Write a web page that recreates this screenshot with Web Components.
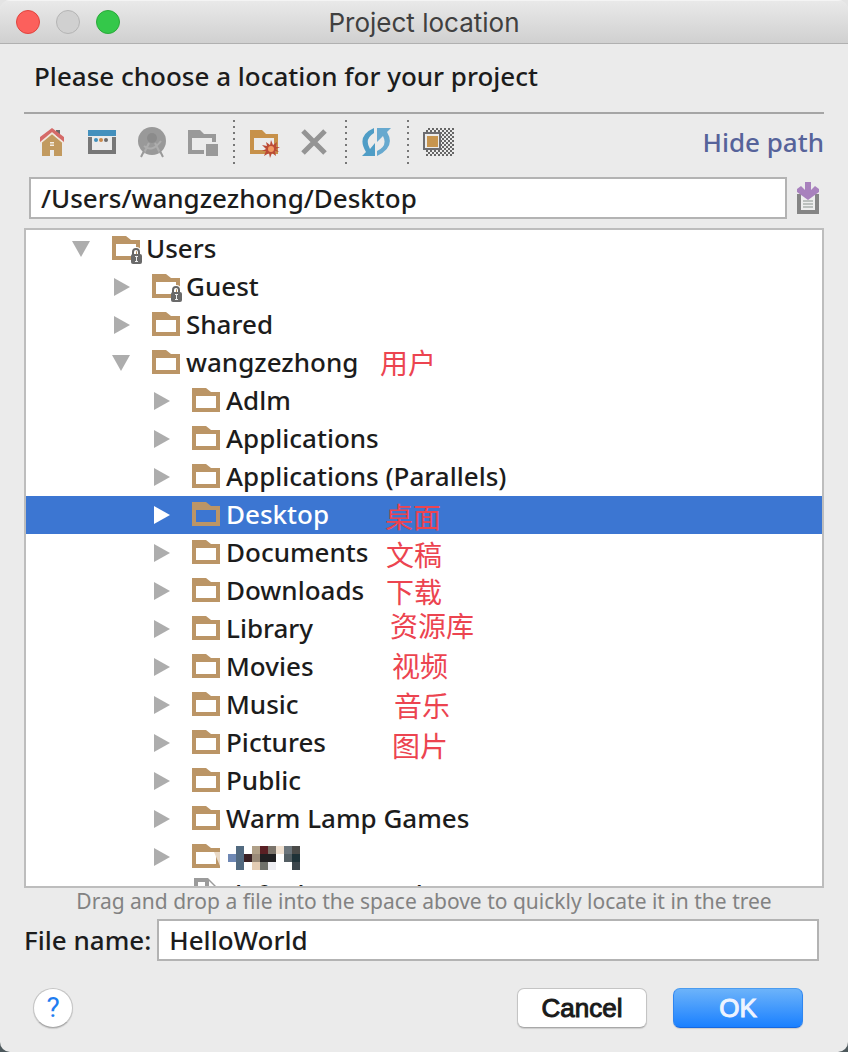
<!DOCTYPE html>
<html lang="en">
<head>
<meta charset="utf-8">
<title>Project location</title>
<style>
  html, body { margin: 0; height: 100%; }
  body {
    background: linear-gradient(#e4e4e4 50%, #4d585c 50%);
    font-family: "Noto Sans", "Noto Sans CJK SC", sans-serif;
    font-size: 26px;
    font-weight: 500;
    color: #1c1c1c;
  }
</style>
</head>
<body>
<project-dialog></project-dialog>
<script>
const define = (name, html, setup) => {
  const template = document.createElement('template');
  template.innerHTML = html;
  customElements.define(name, class extends HTMLElement {
    constructor() {
      super();
      this.attachShadow({ mode: 'open' }).append(template.content.cloneNode(true));
    }
    connectedCallback() { if (setup) setup(this, this.shadowRoot); }
  });
};

/* Window frame with traffic lights */
define('mac-window', `
<style>
  :host { display: flex; flex-direction: column; height: 100vh; background: #ebebeb; border-radius: 10px; overflow: hidden; }
  header { display: grid; grid-template-columns: 1fr auto 1fr; align-items: center; height: 42px; padding: 0 16px;
    background: linear-gradient(#e9e9e9, #d0d0d0); border-top: 1px solid #f4f4f4; border-bottom: 1px solid #b0b0b0; flex: none; }
  .lights { display: flex; gap: 16px; }
  .lights button { width: 24px; height: 24px; padding: 0; border-radius: 50%; border: 1px solid #e0443e; background: #fc605c; }
  .lights .min { border-color: #b4b4b4; background: #d0d0d0; }
  .lights .max { border-color: #2aa93a; background: #34c84a; }
  h1 { margin: 0; padding-top: 2px; font: 400 26px/32px Inter, sans-serif; color: #404040; }
</style>
<header>
  <div class="lights"><button aria-label="Close"></button><button class="min" aria-label="Minimize" disabled></button><button class="max" aria-label="Zoom"></button></div>
  <h1><slot name="title"></slot></h1>
</header>
<slot></slot>`);

/* Toolbar */
const icons = {
  home: `<path d="M20 4h4v9h-4z" fill="#6b6b6b"/><path d="M6 15 16 6l10 9v15h-8v-6h-4v6H6z" fill="#c29a5f"/><path d="M14 16h4v4h-4z" fill="#f4eee4"/><path d="M14 18h4" stroke="#c29a5f"/><path d="M4 17 16 7l12 10" fill="none" stroke="#f1e6dc" stroke-width="2"/><path d="M4 11 16 2l12 9v5L16 6 4 16z" fill="#d56a68"/>`,
  project: `<path d="M2 4h28v6H2z" fill="#4390bd"/><path d="M2 11h4v13h20V11h4v17H2z" fill="#777"/><circle cx="10" cy="14" r="2" fill="#3f8fbc"/><circle cx="15" cy="14" r="2" fill="#cb8a4c"/><circle cx="20" cy="14" r="2" fill="#6b6b6b"/>`,
  module: `<circle cx="16" cy="15" r="14" fill="#999"/><circle cx="16" cy="12" r="5" fill="#8b8b8b"/><path d="M13 17 8 27M19 17l5 10M8 20q8 7 17-5" fill="none" stroke="#adadad" stroke-width="2"/><path d="M8 25 5 31M24 25l3 6" stroke="#999" stroke-width="2"/>`,
  folder: `<path fill-rule="evenodd" d="M2 4h12l4 4h12v8h-4v-4H6v12h12v4H2z" fill="#999"/><path d="M20 18h12v12H20z" fill="#999"/>`,
  create: `<path fill-rule="evenodd" d="M2 4h12l4 4h12v20H2zM6 12v12h20V12z" fill="#c7914a"/><path d="m23 14 2 5 4-3-1 5h4l-4 2 3 3-4-1 1 5-4-3-2 5-1-5-5 3 2-5h-4l4-2-4-4 5 1-1-4 4 3z" fill="#bb4b36"/><circle cx="23" cy="23" r="3" fill="#f29a62"/>`,
  remove: `<path d="m5 5 22 22M27 5 5 27" stroke="#949494" stroke-width="5"/>`,
  refresh: `<path d="M14 2v5Q4 13 10 23l5-6v13H2l4-4Q-4 10 14 2z" fill="#4f9dc6"/><path d="M17 2h14l-4 4q9 15-10 24v-5q11-5 6-15l-6 6z" fill="#67a9cf"/>`,
  hidden: `<defs><pattern id="dots" width="4" height="4" patternUnits="userSpaceOnUse"><path d="M0 0h2v2H0zM2 2h2v2H2z" fill="#666"/></pattern></defs><path d="M4 2h28v28H4z" fill="url(#dots)"/><path d="M2 7h16v16H2z" fill="#ececec" stroke="#6c6c70" stroke-width="2"/><path d="M5 10h11v11H5z" fill="#c7954f"/>`,
  history: `<g transform="translate(3)"><path d="M5 12H2v20h22V12h-4v16H6V12z" fill="#858585"/><path d="M6 12h14v16H6z" fill="#eee"/><path d="M8 19h10M8 22h10M8 25h10" stroke="#8a938e"/><path d="M10 0h6v8l4-4 4 3v3L13 18 2 10V7l4-3 4 4z" fill="#a881bd"/></g>`
};
define('icon-button', `
<style>
  :host { display: block; }
  button { display: block; padding: 0; border: 0; background: none; }
  svg { display: block; width: 32px; height: 32px; }
</style>
<button><svg viewBox="0 0 32 32" aria-hidden="true"></svg></button>`, (el, root) => {
  root.querySelector('svg').innerHTML = icons[el.getAttribute('icon')];
  root.querySelector('button').setAttribute('aria-label', el.getAttribute('label'));
});
define('tool-separator', `
<style>
  :host { display: block; width: 2px; height: 44px; margin: 0 13px 0 15px; background: repeating-linear-gradient(#777 0 2px, transparent 2px 6px); }
</style>`);
define('tool-bar', `
<style>
  :host { display: flex; align-items: center; height: 56px; margin-bottom: 7px; border-top: 2px solid #a5a5a5; }
  .group { display: flex; gap: 18px; }
  .first { padding-left: 12px; }
  a { margin-left: auto; color: #56639a; text-decoration: none; line-height: 32px; }
</style>
<div class="group first">
  <icon-button icon="home" label="Home directory"></icon-button>
  <icon-button icon="project" label="Project directory"></icon-button>
  <icon-button icon="module" label="Module directory"></icon-button>
  <icon-button icon="folder" label="Content root"></icon-button>
</div>
<tool-separator></tool-separator>
<div class="group">
  <icon-button icon="create" label="New folder"></icon-button>
  <icon-button icon="remove" label="Delete"></icon-button>
</div>
<tool-separator></tool-separator>
<icon-button icon="refresh" label="Refresh"></icon-button>
<tool-separator></tool-separator>
<icon-button icon="hidden" label="Show hidden files"></icon-button>
<a href="#"><slot></slot></a>`);

/* Text box, with an optional label in front */
define('text-field', `
<style>
  :host { display: flex; align-items: center; gap: 6px; }
  label:empty { display: none; }
  label { white-space: nowrap; }
  input { flex: 1; min-width: 0; height: 42px; box-sizing: border-box; padding: 0 10px; border: 2px solid #b3b3b3; border-radius: 0; background: #fff; font: inherit; color: inherit; outline: 0; }
</style>
<label for="box"></label><input id="box" type="text">`, (el, root) => {
  const input = root.querySelector('input');
  root.querySelector('label').textContent = el.getAttribute('label') || '';
  if (el.hasAttribute('name')) input.setAttribute('aria-label', el.getAttribute('name'));
  input.value = el.getAttribute('value');
});

/* One line of the file tree */
const folder = `<path fill-rule="evenodd" d="M0 0h14l5 4h9v20H0zM4 8v12h20V8z" fill="#bb9566"/>`;
const glyphs = {
  folder,
  locked: folder + `<path d="M21 20v-4q0-3 3-3t3 3v4" fill="none" stroke="#fff" stroke-width="4"/><path d="M21 20v-4q0-3 3-3t3 3v4" fill="none" stroke="#666" stroke-width="2"/><rect x="19" y="18" width="11" height="10" rx="2" fill="#6a6a6a"/><path d="M23 20h3v1h-1v4h1v1h-3v-1h1v-4h-1z" fill="#eee"/>`,
  file: `<path d="M2-4h14l8 8v22H2zM6 0v22h14V7h-7V0z" fill="#9b9b9b" fill-rule="evenodd"/><path d="m17-1 5 5h-5z" fill="#fff"/>`
};
const mosaic = [
  ['', '#526a80', '', '#b0a088', '#5a2024', '#7a736a', '#efe0d0', '#6b747a', '#4a4a48'],
  ['#6f88b4', '#526a80', '#3a2024', '#9a8a78', '#202022', '#202022', '', '#545f64', '#1f3238'],
  ['', '#526a80', '', '#e4ccb4', '#6f716b', '#eeeef2', '', '', '#3c464c']
];
define('tree-row', `
<style>
  :host { display: flex; align-items: center; height: 38px; flex: none; white-space: nowrap; }
  :host([selected]) { background: #3c76d2; color: #fff; }
  svg { display: block; overflow: visible; flex: none; }
  .arrow { width: 18px; height: 18px; margin-right: 22px; fill: #adadad; }
  :host([selected]) .arrow { fill: #fff; }
  .glyph { width: 28px; height: 28px; padding-top: 2px; margin-right: 6px; }
  span { padding-bottom: 2px; }
  .mosaic { width: 72px; height: 24px; margin: 4px 0 0 2px; }
</style>
<svg class="arrow" viewBox="0 0 18 18" aria-hidden="true"></svg>
<svg class="glyph" viewBox="0 0 28 28" aria-hidden="true"></svg>
<span><slot></slot></span>`, (el, root) => {
  el.style.paddingLeft = 46 + 40 * Number(el.getAttribute('level')) + 'px';
  const kind = el.getAttribute('kind') || 'folder';
  root.querySelector('.glyph').innerHTML = glyphs[kind];
  if (kind !== 'file') {
    root.querySelector('.arrow').innerHTML = el.hasAttribute('open') ? '<path d="M0 1h18L9 17z"/>' : '<path d="M2 0v18l16-9z"/>';
  }
  if (el.hasAttribute('masked')) {
    root.querySelector('span').innerHTML = '<svg class="mosaic" viewBox="0 0 72 24" shape-rendering="crispEdges">' +
      mosaic.map((r, y) => r.map((c, x) => c ? `<rect x="${x * 8}" y="${y * 8}" width="8" height="8" fill="${c}"/>` : '').join('')).join('') + '</svg>';
    root.querySelector('.glyph').innerHTML += '<path d="M22 8h6v14z" fill="#e9d9c6"/>';
  }
});

/* Red translation note laid over the tree */
define('tree-note', `
<style>
  :host { position: absolute; font: 400 28px/32px "Noto Sans CJK SC", sans-serif; color: #ec4450; white-space: nowrap; }
</style>
<slot></slot>`, el => {
  el.style.left = el.getAttribute('x') + 'px';
  el.style.top = el.getAttribute('y') + 'px';
});

define('file-tree', `
<style>
  :host { display: flex; flex-direction: column; position: relative; flex: 1; min-height: 0; overflow: hidden; background: #fff; border: 2px solid #bdbdbd; }
</style>
<slot></slot>`);

define('push-button', `
<style>
  :host { display: block; }
  button { display: block; width: 130px; height: 40px; padding: 0; border: 1px solid #c4c4c4; border-bottom-color: #a8a8a8; border-radius: 7px; background: #fff; box-shadow: 0 1px 1px #0002;
    font: 400 26px/36px "Liberation Sans", sans-serif; color: #1a1a1a; -webkit-text-stroke: 1px currentColor; }
  :host([primary]) button { background: linear-gradient(#6cb3fa, #1a80ff); border-color: #4a9bef #2f86f0 #1668e0; color: #eef4ff; }
  :host([round]) button { width: 40px; border-radius: 50%; color: #1f7df0; font-family: Roboto, sans-serif; font-size: 28px; -webkit-text-stroke: 0; }
</style>
<button><slot></slot></button>`);

define('project-dialog', `
<style>
  :host { display: block; }
  .body { display: flex; flex-direction: column; flex: 1; min-height: 0; padding: 14px 24px 24px; }
  h2 { margin: 0 0 18px 10px; font-size: 26px; line-height: 36px; font-weight: 500; }
  .path { display: flex; align-items: center; gap: 5px; padding-left: 5px; margin-bottom: 9px; }
  .path text-field { flex: 1; }
  .hint { margin: 0; font-size: 21px; line-height: 26px; text-align: center; color: #828282; font-weight: 400; }
  .name { margin: 5px 5px 27px 0; }
  footer { display: flex; align-items: center; gap: 26px; padding: 0 21px 0 9px; }
  .help { margin-right: auto; }
</style>
<mac-window>
  <span slot="title">Project location</span>
  <div class="body">
    <h2>Please choose a location for your project</h2>
    <tool-bar>Hide path</tool-bar>
    <div class="path">
      <text-field name="Path" value="/Users/wangzezhong/Desktop"></text-field>
      <icon-button icon="history" label="Recent paths"></icon-button>
    </div>
    <file-tree>
      <tree-row level="0" kind="locked" open>Users</tree-row>
      <tree-row level="1" kind="locked">Guest</tree-row>
      <tree-row level="1">Shared</tree-row>
      <tree-row level="1" open>wangzezhong</tree-row>
      <tree-row level="2">Adlm</tree-row>
      <tree-row level="2">Applications</tree-row>
      <tree-row level="2">Applications (Parallels)</tree-row>
      <tree-row level="2" selected>Desktop</tree-row>
      <tree-row level="2">Documents</tree-row>
      <tree-row level="2">Downloads</tree-row>
      <tree-row level="2">Library</tree-row>
      <tree-row level="2">Movies</tree-row>
      <tree-row level="2">Music</tree-row>
      <tree-row level="2">Pictures</tree-row>
      <tree-row level="2">Public</tree-row>
      <tree-row level="2">Warm Lamp Games</tree-row>
      <tree-row level="2" masked></tree-row>
      <tree-row level="2" kind="file">defaultuser.Pack</tree-row>
      <tree-note x="354" y="116">用户</tree-note>
      <tree-note x="359" y="270">桌面</tree-note>
      <tree-note x="360" y="308">文稿</tree-note>
      <tree-note x="360" y="345">下载</tree-note>
      <tree-note x="364" y="379">资源库</tree-note>
      <tree-note x="366" y="419">视频</tree-note>
      <tree-note x="368" y="459">音乐</tree-note>
      <tree-note x="366" y="499">图片</tree-note>
    </file-tree>
    <p class="hint">Drag and drop a file into the space above to quickly locate it in the tree</p>
    <text-field class="name" label="File name:" value="HelloWorld"></text-field>
    <footer>
      <push-button class="help" round>?</push-button>
      <push-button>Cancel</push-button>
      <push-button primary>OK</push-button>
    </footer>
  </div>
</mac-window>`);
</script>
</body>
</html>
